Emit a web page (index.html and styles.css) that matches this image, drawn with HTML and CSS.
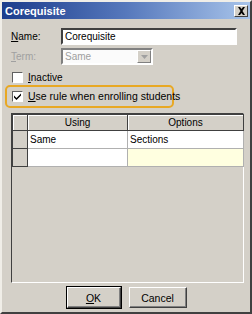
FILE: index.html
```html
<!DOCTYPE html>
<html lang="en">
<head>
    <meta charset="UTF-8">
    <title>Corequisite</title>
    <link rel="stylesheet" href="styles.css">
</head>
<body>
    <div class="janela">
        <div class="titulo">
            <span>Corequisite</span>
            <span class="fechar">
                <svg width="9" height="8" viewBox="0 0 9 8"><path d="M1 0h2l1.5 2L6 0h2L5.5 4 8 8H6L4.5 6 3 8H1l2.5-4z" fill="#000"/></svg>
            </span>
        </div>

        <div class="conteudo">
            <div class="linha">
                <label class="rotulo"><u>N</u>ame:</label>
                <div class="campo campo-nome">Corequisite</div>
            </div>
            <div class="linha">
                <label class="rotulo desativado"><u>T</u>erm:</label>
                <div class="campo campo-termo">
                    <span>Same</span>
                    <span class="seta"><svg width="7" height="4" viewBox="0 0 7 4"><path d="M0 0h7L3.5 4z" fill="#a0a0a0"/></svg></span>
                </div>
            </div>

            <div class="marcar inativo">
                <span class="caixa"></span>
                <span><u>I</u>nactive</span>
            </div>
            <div class="destaque">
                <div class="marcar">
                    <span class="caixa">
                        <svg width="9" height="9" viewBox="0 0 9 9"><path d="M1 3.5l2.5 2.5L8 1.5v2L3.5 8 1 5.5z" fill="#000"/></svg>
                    </span>
                    <span><u>U</u>se rule when enrolling students</span>
                </div>
            </div>

            <div class="grade">
                <table>
                    <tr class="cabecalho">
                        <th class="seletor"></th>
                        <th class="col-usando">Using</th>
                        <th>Options</th>
                    </tr>
                    <tr>
                        <td class="seletor"></td>
                        <td>Same</td>
                        <td>Sections</td>
                    </tr>
                    <tr>
                        <td class="seletor"></td>
                        <td></td>
                        <td class="amarelo"></td>
                    </tr>
                </table>
            </div>

            <div class="botoes">
                <button class="padrao"><u>O</u>K</button>
                <button>Cancel</button>
            </div>
        </div>
    </div>
</body>
</html>
```

FILE: styles.css
```css
html,
body {
    margin: 0;
    padding: 0;
    font-family: 'Liberation Sans', Arial, sans-serif;
    font-size: 10px;
    background-color: #d4d0c8;
}

.janela {
    width: 252px;
    height: 314px;
    box-sizing: border-box;
    background-color: #d4d0c8;
    border: 2px solid;
    border-color: #f0eee8 #404040 #404040 #f0eee8;
    display: flex;
    flex-direction: column;
}

.titulo {
    height: 17px;
    padding: 0 2px 0 3px;
    background: linear-gradient(to right, #1c3d8c, #5678bc 50%, #a8c4ea);
    color: white;
    font-weight: bold;
    font-size: 11px;
    display: flex;
    align-items: center;
    justify-content: space-between;
}

.fechar {
    width: 14px;
    height: 12px;
    box-sizing: border-box;
    background-color: #d4d0c8;
    border: 1px solid;
    border-color: #ffffff #404040 #404040 #ffffff;
    display: flex;
    align-items: center;
    justify-content: center;
}

.conteudo {
    flex: 1;
    padding: 9px 6px 4px 1px;
    display: flex;
    flex-direction: column;
}

.linha {
    display: flex;
    align-items: center;
    margin-bottom: 3px;
    padding-left: 8px;
}

.rotulo {
    width: 50px;
    color: #000;
}

.desativado {
    color: #a0a0a0;
}

.campo {
    height: 17px;
    box-sizing: border-box;
    border: 2px solid;
    border-color: #404040 #ffffff #ffffff #404040;
    background-color: white;
    padding: 0 2px;
    display: flex;
    align-items: center;
}

.campo-nome {
    width: 176px;
}

.campo-termo {
    width: 92px;
    color: #a0a0a0;
    border-color: #808080 #ffffff #ffffff #808080;
    padding-right: 0;
    justify-content: space-between;
    background-color: #fbfbfb;
}

.seta {
    width: 14px;
    height: 13px;
    box-sizing: border-box;
    background-color: #d4d0c8;
    border: 1px solid;
    border-color: #ffffff #808080 #808080 #ffffff;
    display: flex;
    align-items: center;
    justify-content: center;
}

.marcar {
    display: flex;
    align-items: center;
    gap: 5px;
    padding-left: 9px;
    height: 16px;
    white-space: nowrap;
}

.inativo {
    margin-top: 3px;
    height: 13px;
}

.caixa {
    width: 11px;
    height: 11px;
    box-sizing: border-box;
    background-color: white;
    border: 1px solid;
    border-color: #606060 #ffffff #ffffff #606060;
    display: flex;
    align-items: center;
    justify-content: center;
}

.destaque {
    width: 165px;
    margin: 1px 0 0 2px;
    padding: 1px 0 2px;
    border: 2px solid #e8a824;
    border-radius: 5px;
}

.destaque .marcar {
    padding-left: 5px;
    font-size: 10.5px;
}

.grade {
    margin: 5px 0 0 8px;
    height: 168px;
    border: 1px solid;
    border-color: #404040 #ffffff #ffffff #404040;
    background-color: #d4d0c8;
}

table {
    border-collapse: collapse;
    width: 232px;
    table-layout: fixed;
}

th,
td {
    border: 1px solid #404040;
    padding: 0 2px;
    height: 16px;
    font-weight: normal;
    background-color: white;
    text-align: left;
}

th {
    background-color: #d4d0c8;
    text-align: center;
    height: 15px;
    border: 1px solid #404040;
    box-shadow: inset 1px 1px 0 #ffffff;
}

td {
    border-color: #b0b0b0;
    height: 17px;
}

.seletor {
    width: 10px;
    background-color: #d4d0c8;
    border: 1px solid #404040;
}

.col-usando {
    width: 95px;
}

.amarelo {
    background-color: #ffffe0;
}

.botoes {
    margin-top: auto;
    display: flex;
    justify-content: center;
    gap: 8px;
    padding-left: 6px;
}

button {
    font-family: 'Liberation Sans', Arial, sans-serif;
    font-size: 10.5px;
    width: 58px;
    height: 21px;
    background-color: #d4d0c8;
    border: 1px solid;
    border-color: #ffffff #404040 #404040 #ffffff;
    box-shadow: inset -1px -1px 0 #808080;
    padding: 0;
}

.padrao {
    width: 54px;
    outline: 1px solid #000;
}
```
